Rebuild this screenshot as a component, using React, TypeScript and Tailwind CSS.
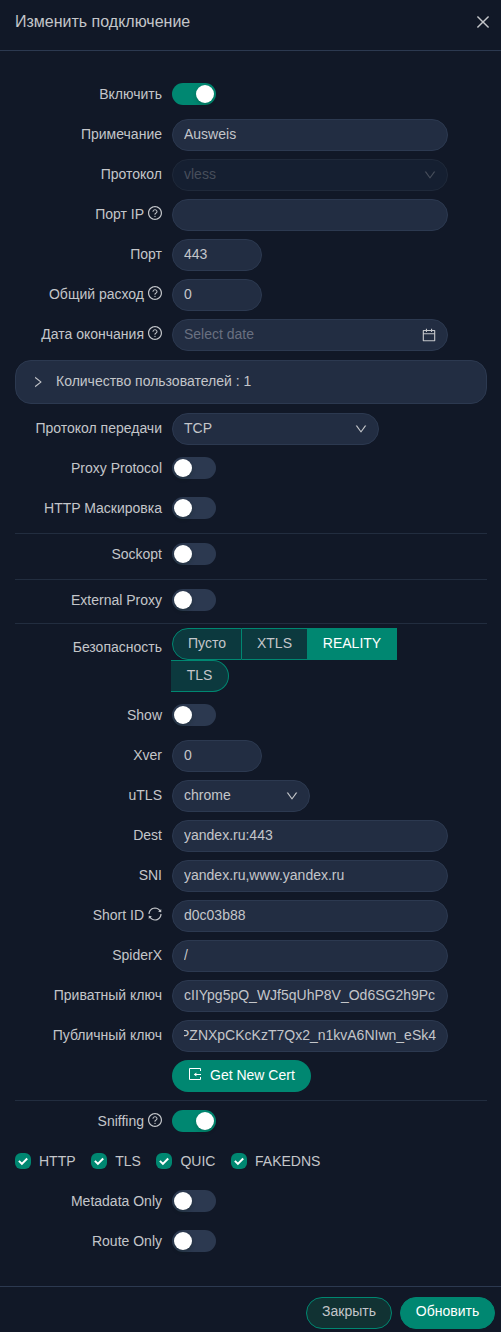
import type { ReactNode } from "react";
import {
  AiOutlineCalendar,
  AiOutlineClose,
  AiOutlineDown,
  AiOutlineQuestionCircle,
  AiOutlineRight,
  AiOutlineSync,
} from "react-icons/ai";

const Help = () => <AiOutlineQuestionCircle className="-mx-px mb-0.5 h-4 w-4" />;

const ImportIcon = () => (
  <svg viewBox="0 0 14 14" className="mb-0.5 h-3.5 w-3.5" fill="none" stroke="currentColor">
    <path d="M12.5 4V1.5h-11v11h11V10" />
    <path d="M7 7.5h6" />
    <path d="M5.8 7.5 8.4 5.6v3.8z" fill="currentColor" stroke="none" />
  </svg>
);

function Row({ label, icon, children }: { label?: string; icon?: ReactNode; children: ReactNode }) {
  return (
    <div className="flex h-10 items-center">
      <div className="mr-2.5 flex h-[38px] w-[147px] shrink-0 items-center justify-end gap-1 self-start whitespace-nowrap">
        {label && <span>{label}</span>}
        {icon}
      </div>
      {children}
    </div>
  );
}

function Toggle({ on = false }: { on?: boolean }) {
  return (
    <button
      role="switch"
      aria-checked={on}
      className={`mb-0.5 flex h-[22px] w-11 items-center rounded-full px-0.5 ${on ? "justify-end bg-[#008771]" : "justify-start bg-[#2c3950]"}`}
    >
      <span className="h-[18px] w-[18px] rounded-full bg-white shadow-[0_2px_4px_0_rgba(0,35,11,0.2)]" />
    </button>
  );
}

function Field({ value, width = "w-[276px]", end = false }: { value: string; width?: string; end?: boolean }) {
  return (
    <div className={`${width} flex h-8 items-center rounded-2xl border border-[#2c3950] bg-[#222d42] px-[11px]`}>
      <div className={`flex w-full overflow-hidden whitespace-nowrap pb-0.5 ${end ? "justify-end" : ""}`}>
        <span>{value}</span>
      </div>
    </div>
  );
}

function Select({ value, width, disabled = false }: { value: string; width: string; disabled?: boolean }) {
  return (
    <div
      className={`${width} flex h-8 items-center justify-between rounded-2xl border pr-2.5 pl-[11px] ${
        disabled ? "border-[#1f293a] bg-[#151f31] text-[#474e5b]" : "border-[#2c3950] bg-[#222d42]"
      }`}
    >
      <span className="pb-0.5">{value}</span>
      <AiOutlineDown className="h-3.5 w-3.5" />
    </div>
  );
}

const Divider = ({ className = "" }: { className?: string }) => (
  <hr className={`mr-3.5 ml-[15px] border-0 bg-[#222d3f] ${className}`} />
);

function Check({ label }: { label: string }) {
  return (
    <label className="flex items-center gap-2">
      <span className="flex h-4 w-4 items-center justify-center rounded-[6px] bg-[#008771]">
        <svg viewBox="0 0 16 16" className="h-4 w-4" fill="none" stroke="white" strokeWidth="2">
          <path d="M3.9 7.9 6.9 10.9 12.2 5.5" />
        </svg>
      </span>
      <span className="pb-px">{label}</span>
    </label>
  );
}

export default function App() {
  return (
    <div className="flex h-[1332px] w-[501px] flex-col overflow-hidden bg-[#111827] font-['Liberation_Sans',sans-serif] text-[14px] leading-[22px] text-[#c4c6ca]">
      <header className="flex h-[51px] shrink-0 items-start justify-between border-b border-[#2c3950] pt-[11px] pr-[9px] pl-[15px]">
        <h1 className="text-[16px] leading-[22px]">Изменить подключение</h1>
        <AiOutlineClose className="mt-0.5 h-[18px] w-[18px]" />
      </header>

      <main className="pt-6">
        <section className="pl-[15px]">
          <Row label="Включить"><Toggle on /></Row>
          <Row label="Примечание"><Field value="Ausweis" /></Row>
          <Row label="Протокол"><Select value="vless" width="w-[276px]" disabled /></Row>
          <Row label="Порт IP" icon={<Help />}><Field value="" /></Row>
          <Row label="Порт"><Field value="443" width="w-[90px]" /></Row>
          <Row label="Общий расход" icon={<Help />}><Field value="0" width="w-[90px]" /></Row>
          <Row label="Дата окончания" icon={<Help />}>
            <div className="flex h-8 w-[276px] items-center justify-between rounded-2xl border border-[#2c3950] bg-[#222d42] pr-2.5 pl-[11px]">
              <span className="pb-0.5 text-[#697080]">Select date</span>
              <AiOutlineCalendar className="h-4 w-4" />
            </div>
          </Row>
        </section>

        <div className="mt-[5px] mr-3.5 mb-[5px] ml-[15px] flex h-11 items-center rounded-2xl border border-[#2c3950] bg-[#222d42] pl-[15px]">
          <AiOutlineRight className="h-3.5 w-3.5" />
          <span className="ml-[11px] pb-0.5">Количество пользователей : 1</span>
        </div>

        <section className="pl-[15px]">
          <Row label="Протокол передачи"><Select value="TCP" width="w-[207px]" /></Row>
          <Row label="Proxy Protocol"><Toggle /></Row>
          <Row label="HTTP Маскировка"><Toggle /></Row>
        </section>
        <Divider className="mt-1 mb-px h-px" />
        <section className="pl-[15px]">
          <Row label="Sockopt"><Toggle /></Row>
        </section>
        <Divider className="mt-1 mb-px h-px" />
        <section className="pl-[15px]">
          <Row label="External Proxy"><Toggle /></Row>
        </section>
        <Divider className="mt-0.5 mb-1 h-px" />

        <section className="flex h-[68px] pl-[15px]">
          <div className="mr-[9px] w-[147px] pt-2 text-right">Безопасность</div>
          <div>
            <div className="ml-px flex h-8 leading-[30px]">
              <button className="w-[70px] rounded-l-2xl border border-[#008771] bg-[#0c393e]">
                <span className="block pb-0.5 leading-7">Пусто</span>
              </button>
              <button className="w-[65px] border-y border-[#008771] bg-[#0c393e]">
                <span className="block pb-0.5 leading-7">XTLS</span>
              </button>
              <button className="w-[90px] border border-[#008771] bg-[#008771] text-white">
                <span className="block pb-0.5 leading-7">REALITY</span>
              </button>
            </div>
            <button className="h-8 w-[58px] rounded-r-2xl border border-l-0 border-[#008771] bg-[#0c393e]">
              <span className="block pb-0.5 leading-7">TLS</span>
            </button>
          </div>
        </section>

        <section className="pl-[15px]">
          <Row label="Show"><Toggle /></Row>
          <Row label="Xver"><Field value="0" width="w-[90px]" /></Row>
          <Row label="uTLS"><Select value="chrome" width="w-[138px]" /></Row>
          <Row label="Dest"><Field value="yandex.ru:443" /></Row>
          <Row label="SNI"><Field value="yandex.ru,www.yandex.ru" /></Row>
          <Row label="Short ID" icon={<AiOutlineSync className="-mx-px mb-0.5 h-4 w-4" />}><Field value="d0c03b88" /></Row>
          <Row label="SpiderX"><Field value="/" /></Row>
          <Row label="Приватный ключ"><Field value="cIIYpg5pQ_WJf5qUhP8V_Od6SG2h9Pc" /></Row>
          <Row label="Публичный ключ"><Field value="PZNXpCKcKzT7Qx2_n1kvA6NIwn_eSk4" end /></Row>
          <Row>
            <button className="flex h-8 w-[139px] items-center gap-2 rounded-2xl bg-[#008771] pb-0.5 pl-4 whitespace-nowrap text-white">
              <ImportIcon />
              <span>Get New Cert</span>
            </button>
          </Row>
        </section>
        <Divider className="mt-1 mb-px h-px" />
        <section className="pl-[15px]">
          <Row label="Sniffing" icon={<Help />}><Toggle on /></Row>
          <div className="flex h-10 items-center gap-[15.6px] pb-0.5">
            <Check label="HTTP" />
            <Check label="TLS" />
            <Check label="QUIC" />
            <Check label="FAKEDNS" />
          </div>
          <Row label="Metadata Only"><Toggle /></Row>
          <Row label="Route Only"><Toggle /></Row>
        </section>
      </main>

      <footer className="mt-6 flex h-[46px] shrink-0 justify-end gap-2 border-t border-[#2c3950] pt-2.5 pr-1.5">
        <button className="h-8 w-[86px] rounded-2xl border border-[#008771] bg-[#113233]">
          <span className="block pb-1 leading-[26px]">Закрыть</span>
        </button>
        <button className="h-8 w-[95px] rounded-2xl border border-[#008771] bg-[#008771] text-white">
          <span className="block pb-1 leading-[26px]">Обновить</span>
        </button>
      </footer>
    </div>
  );
}
